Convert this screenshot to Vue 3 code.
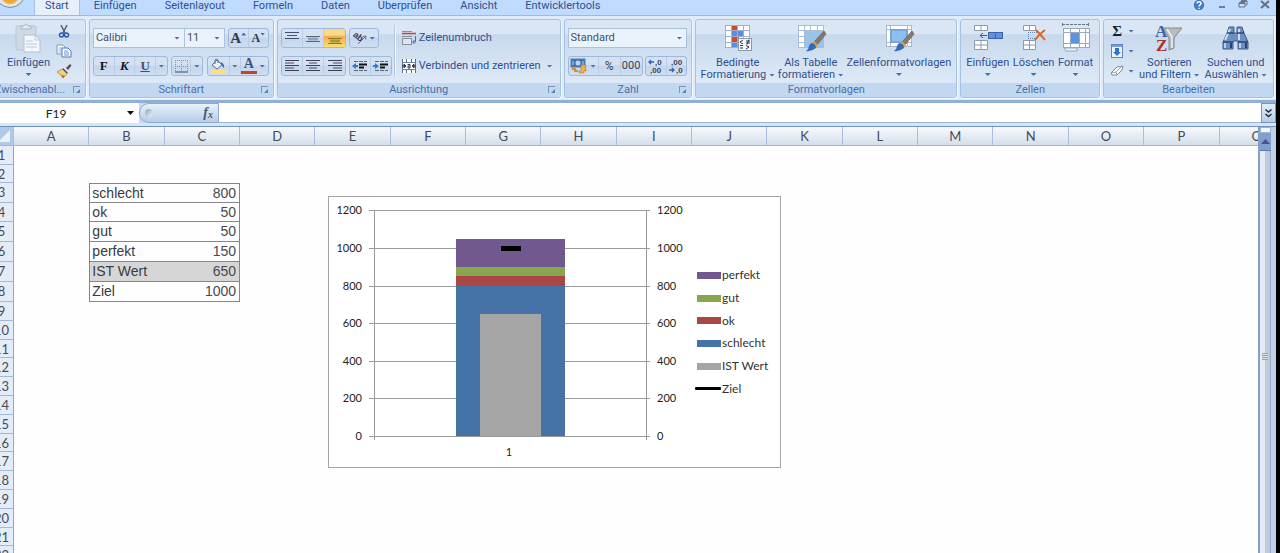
<script setup>
const tabs = ['Start', 'Einfügen', 'Seitenlayout', 'Formeln', 'Daten', 'Überprüfen', 'Ansicht', 'Entwicklertools']
const columns = 'ABCDEFGHIJKLMNOPQ'.split('')
const data = {
  3: ['schlecht', 800],
  4: ['ok', 50],
  5: ['gut', 50],
  6: ['perfekt', 150],
  7: ['IST Wert', 650],
  8: ['Ziel', 1000],
}
const tall = [3, 5, 6, 7, 8]
const short = [2, 11, 16, 21]
const rows = Array.from({ length: 22 }, (_, i) => {
  const n = i + 1
  return { n, cells: data[n], size: tall.includes(n) ? 'tall' : short.includes(n) ? 'short' : '' }
})

const y = (v) => Math.round(239 - v * 0.188)
const ticks = [0, 200, 400, 600, 800, 1000, 1200]
const stack = [
  { from: 0, to: 800, color: '#4572a7' },
  { from: 800, to: 850, color: '#aa4643' },
  { from: 850, to: 900, color: '#89a54e' },
  { from: 900, to: 1050, color: '#71588f' },
]
const legend = [
  { name: 'perfekt', kind: 'purple' },
  { name: 'gut', kind: 'green' },
  { name: 'ok', kind: 'red' },
  { name: 'schlecht', kind: 'blue' },
  { name: 'IST Wert', kind: 'grey' },
  { name: 'Ziel', kind: 'line' },
]
</script>

<template>
  <div class="window">
    <nav class="tabs">
      <span class="orb"><i></i></span>
      <button v-for="(t, i) in tabs" :key="t" :class="['tab', { active: i === 0 }]">{{ t }}</button>
      <div class="wincontrols">
        <button aria-label="Hilfe">
          <svg width="14" height="14" viewBox="0 0 14 14"><circle cx="7" cy="4" r="6" fill="#3b7cc9" stroke="#cfe0f2" stroke-width="1.5" /><path d="M5 2.500Q5 .8 7 .8T9 2.600Q9 3.600 7.800 4.200Q7 4.600 7 5.600M7 6.800V8" fill="none" stroke="#fff" stroke-width="1.5" /></svg>
        </button>
        <button aria-label="Minimieren">
          <svg width="8" height="14" viewBox="0 0 8 14"><path d="M1 6H7" stroke="#6b7f9b" stroke-width="2" /></svg>
        </button>
        <button aria-label="Wiederherstellen">
          <svg width="10" height="14" viewBox="0 0 10 14"><path d="M3 1V0H9V4H7.500M1 2H7V6H1Z" fill="none" stroke="#6b7487" stroke-width="1" /><path d="M1 2H7M3 0H9" stroke="#6b7487" stroke-width="2" /></svg>
        </button>
        <button aria-label="Schließen">
          <svg width="10" height="14" viewBox="0 0 10 14"><path d="M1 0L9 7M9 0L1 7" stroke="#6b6f7c" stroke-width="2" /></svg>
        </button>
      </div>
    </nav>

    <div class="ribbon">
      <section class="group g-clip">
        <div class="body">
          <button class="big">
            <svg width="28" height="30" viewBox="0 0 28 30"><rect x="2" y="3" width="20" height="24" rx="2" fill="#cfd9e6" stroke="#b9c5d5" /><path d="M7 6V3H10Q12 -1 14 3H17V6Z" fill="#e3e9f1" stroke="#a9b6c8" /><path d="M10 12H21L26 17V29H10Z" fill="#f3f6fa" stroke="#b4c0d0" /><path d="M21 12V17H26M12 18H19M12 21H23M12 24H23" fill="none" stroke="#c0cad8" /></svg>
            <span>Einfügen</span>
            <i class="arr"></i>
          </button>
          <div class="smallcol">
            <button aria-label="Ausschneiden">
              <svg width="16" height="16" viewBox="0 0 16 16"><path d="M5 2L9 10M11 2L7 10" stroke="#51627d" stroke-width="1.6" /><circle cx="5.500" cy="12" r="2" fill="none" stroke="#2a5cb8" stroke-width="1.5" /><circle cx="10.500" cy="12" r="2" fill="none" stroke="#2a5cb8" stroke-width="1.5" /></svg>
            </button>
            <button aria-label="Kopieren">
              <svg width="16" height="16" viewBox="0 0 16 16"><path d="M1 2H7L9 4V11H1Z" fill="#fff" stroke="#7d97bf" /><path d="M2.500 5H7M2.500 7H7M2.500 9H7" stroke="#8fb1e0" /><path d="M6 5H12L15 8V14H6Z" fill="#fff" stroke="#5577b4" /><path d="M8 8H12M8 10H13M8 12H13" stroke="#5f90da" /></svg>
            </button>
            <button aria-label="Format übertragen">
              <svg width="16" height="16" viewBox="0 0 16 16"><path d="M10 5L14 1L15.500 2.500L12 7Z" fill="#55524a" /><path d="M7 5L12 10L10 11L6 7Z" fill="#3f4654" /><path d="M6 6L11 11L7 15L5 12L1 9Z" fill="#f3cf7d" stroke="#c99642" /><path d="M5 12L7 15L9 13" fill="#b5642b" /></svg>
            </button>
          </div>
        </div>
        <footer><span class="cut">Zwischenabl...</span><i class="launch"></i></footer>
      </section>

      <section class="group g-font">
        <div class="body stackrows">
          <div class="line">
            <label class="combo c-name"><select aria-label="Schriftart"><option>Calibri</option></select><i class="arr"></i></label>
            <label class="combo c-size"><select aria-label="Schriftgrad"><option>11</option></select><i class="arr"></i></label>
            <div class="set s-41 gap-l">
              <button class="serif-a big-a">A<i class="up"></i></button>
              <button class="serif-a small-a">A<i class="down"></i></button>
            </div>
          </div>
          <div class="line between">
            <div class="set s-75">
              <button class="fmt">F</button><button class="fmt it">K</button><button class="fmt un">U</button><button class="drop" aria-label="Unterstreichen"><i class="arr"></i></button>
            </div>
            <div class="set s-32">
              <button aria-label="Rahmen"><svg width="13" height="13" viewBox="0 0 13 13"><path d="M.5 0V12M12.500 0V12M6.500 0V12M0 .5H13M0 6.500H13" stroke="#8292aa" stroke-dasharray="1 1" /><path d="M0 12H13" stroke="#3f4c60" stroke-width="1" /></svg></button><button class="drop" aria-label="Rahmenarten"><i class="arr"></i></button>
            </div>
            <div class="set s-62">
              <button aria-label="Füllfarbe"><svg width="16" height="16" viewBox="0 0 16 16"><path d="M7 2L12 7L7 11L2 7Z" fill="#e8eef6" stroke="#5c6f8d" /><path d="M5 6V2Q6 0 8 2V5" fill="none" stroke="#5c6f8d" /><path d="M10 4Q15 5 14 10Q12 9 12 7Z" fill="#3f70b5" /><rect x="1" y="12" width="14" height="3" fill="#ffdf80" /></svg></button><button class="drop" aria-label="Füllfarben"><i class="arr"></i></button>
              <button class="fontcolor" aria-label="Schriftfarbe">A</button><button class="drop" aria-label="Schriftfarben"><i class="arr"></i></button>
            </div>
          </div>
        </div>
        <footer><span>Schriftart</span><i class="launch"></i></footer>
      </section>

      <section class="group g-align">
        <div class="body">
          <div class="stackcol">
            <div class="line g3">
              <div class="set s-64">
                <button aria-label="Oben ausrichten"><svg width="14" height="14" viewBox="0 0 14 14"><path d="M0 1.500H14M0 7.500H14" stroke="#46506a" /><path d="M2 4.500H12" stroke="#7d3f6b" /></svg></button>
                <button aria-label="Zentriert ausrichten"><svg width="14" height="14" viewBox="0 0 14 14"><path d="M0 5.500H14M0 10.500H14" stroke="#5e6879" /><path d="M2 8H12" stroke="#8fa1bd" stroke-width="3" /></svg></button>
                <button class="on" aria-label="Unten ausrichten"><svg width="14" height="14" viewBox="0 0 14 14"><path d="M0 7.500H14M0 12.500H14" stroke="#8d7a2a" /><path d="M2 10H12" stroke="#a19b3e" stroke-width="3" /></svg></button>
              </div>
              <div class="set s-30">
                <button aria-label="Orientierung"><svg width="17" height="16" viewBox="0 0 17 16"><text x="1" y="8" transform="rotate(38 4 6)" class="ab">ab</text><path d="M6 14L14 6M14 6L10.500 6.500M14 6L13.500 9.500" stroke="#6b7687" fill="none" /></svg><i class="arr"></i></button>
              </div>
            </div>
            <div class="line g3">
              <div class="set s-64">
                <button aria-label="Linksbündig"><svg width="14" height="12" viewBox="0 0 14 12"><path d="M0 .5H14M0 5.500H14M0 10.500H14" stroke="#3b4254" /><path d="M0 3H9M0 8H9" stroke="#59406a" /></svg></button>
                <button aria-label="Zentriert"><svg width="14" height="12" viewBox="0 0 14 12"><path d="M0 .5H14M0 5.500H14M0 10.500H14" stroke="#3b4254" /><path d="M3 3H11M3 8H11" stroke="#59406a" /></svg></button>
                <button aria-label="Rechtsbündig"><svg width="14" height="12" viewBox="0 0 14 12"><path d="M0 .5H14M0 5.500H14M0 10.500H14" stroke="#3b4254" /><path d="M5 3H14M5 8H14" stroke="#59406a" /></svg></button>
              </div>
              <div class="set s-43">
                <button aria-label="Einzug verkleinern"><svg width="16" height="13" viewBox="0 0 16 13"><path d="M2 1.500H15M2 10.500H15" stroke="#59647a" stroke-dasharray="4 1" /><path d="M7 4.500H15M7 7.500H12" stroke="#111" stroke-width="2" /><path d="M0 6L4 3V5H6V7H4V9Z" fill="#2f7ad0" /></svg></button>
                <button aria-label="Einzug vergrößern"><svg width="16" height="13" viewBox="0 0 16 13"><path d="M2 1.500H15M2 10.500H15" stroke="#59647a" stroke-dasharray="4 1" /><path d="M7 4.500H15M7 7.500H12" stroke="#111" stroke-width="2" /><path d="M6 6L2 3V5H0V7H2V9Z" fill="#2f7ad0" /></svg></button>
              </div>
            </div>
          </div>
          <div class="sep"></div>
          <div class="stackcol">
            <button class="wide">
              <svg width="16" height="16" viewBox="0 0 16 16"><path d="M1 1.500H11M1 6.500H11" stroke="#87909f" /><path d="M1 3.500H15" stroke="#c5403b" stroke-width="1.500" /><rect x="1.500" y="8.500" width="9" height="6" fill="#dfe5ee" stroke="#87909f" /><path d="M14.500 6V12H12M13.500 10L11.500 12L13.500 14" fill="none" stroke="#3e6db0" /></svg>
              Zeilenumbruch
            </button>
            <button class="wide">
              <svg width="16" height="16" viewBox="0 0 16 16"><rect x="1" y="1" width="14" height="14" fill="#fff" /><path d="M1.500 1V15M14.500 1V15M5.500 1V4M10.500 1V4M5.500 12V15M10.500 12V15" stroke="#5b6c88" /><path d="M1 4.500H15M1 11.500H15" stroke="#6d83a6" /><path d="M1 8H4M15 8H12M3 6L5 8L3 10ZM13 6L11 8L13 10Z" fill="#333b4c" stroke="#333b4c" /><path d="M6.500 6.500H9V10H7V8H9" fill="none" stroke="#333b4c" /></svg>
              Verbinden und zentrieren <i class="arr"></i>
            </button>
          </div>
        </div>
        <footer><span>Ausrichtung</span><i class="launch"></i></footer>
      </section>

      <section class="group g-num">
        <div class="body stackrows">
          <label class="combo c-num"><select aria-label="Zahlenformat"><option>Standard</option></select><i class="arr"></i></label>
          <div class="line between">
            <div class="set s-75">
              <button class="money" aria-label="Buchhaltung"><svg width="17" height="16" viewBox="0 0 17 16"><rect x="1" y="1" width="14" height="8" fill="#3b74b5" stroke="#5f7ea6" /><circle cx="8" cy="5" r="2.500" fill="#bcd4ee" /><path d="M3 3V7M13 3V7" stroke="#bcd4ee" /><path d="M11 7H16V9H15V11H16V13H14V15H9V13H11Z" fill="#f0b24b" stroke="#b26c1d" stroke-width=".5" /><path d="M2 11H6M4 13H8" stroke="#d98b39" stroke-width="2" /></svg><i class="arr"></i></button>
              <button class="sym">%</button><button class="sym narrow">000</button>
            </div>
            <div class="set s-42">
              <button aria-label="Dezimalstelle hinzufügen"><svg width="18" height="16" viewBox="0 0 18 16"><path d="M2 4H7M4 2L2 4L4 6" stroke="#2f67b8" stroke-width="1.300" fill="none" /><text x="8" y="7" class="dec">,0</text><text x="3" y="15" class="dec">,00</text></svg></button>
              <button aria-label="Dezimalstelle löschen"><svg width="18" height="16" viewBox="0 0 18 16"><text x="3" y="7" class="dec">,00</text><path d="M1 12H6M4 10L6 12L4 14" stroke="#2f67b8" stroke-width="1.300" fill="none" /><text x="8" y="15" class="dec">,0</text></svg></button>
            </div>
          </div>
        </div>
        <footer><span>Zahl</span><i class="launch"></i></footer>
      </section>

      <section class="group g-styles">
        <div class="body">
          <button class="big">
            <svg width="30" height="30" viewBox="0 0 30 30"><rect x="2" y="2" width="25" height="23" fill="#fff" /><rect x="8" y="2" width="6" height="5" fill="#d0492b" /><rect x="8" y="8" width="12" height="6" fill="#5a8ddd" /><rect x="8" y="14" width="8" height="5" fill="#d0492b" /><rect x="8" y="20" width="7" height="5" fill="#5a8ddd" /><path d="M2.500 2V25M8.500 2V25M14.500 2V25M20.500 2V25M26.500 2V25M2 2.500H27M2 7.500H27M2 13.500H27M2 19.500H27M2 24.500H27" stroke="#9fb2cd" /><rect x="15.500" y="15.500" width="13" height="12" fill="#f4f6f9" stroke="#8a99b0" /><path d="M20 17L17 19L20 21M17 22.500H20M17 25H20M23 18H27M23 20H27M26 16.500L24 21.500M23 22.500L26 24L23 26" fill="none" stroke="#303745" /></svg>
            <span>Bedingte<br>Formatierung <i class="arr"></i></span>
          </button>
          <button class="big">
            <svg width="30" height="30" viewBox="0 0 30 30"><rect x="2" y="2" width="26" height="23" fill="#fff" /><rect x="8" y="8" width="20" height="17" fill="#93c6f3" /><path d="M2.500 2V25M8.500 2V25M14.500 2V25M21.500 2V25M27.500 2V25M2 2.500H28M2 7.500H28M2 13.500H28M2 19.500H28M2 24.500H28" stroke="#a9bdd8" /><path d="M28 8L18 19L21 22L30 11Z" fill="#88786b" stroke="#5c5148" stroke-width=".6" /><path d="M18 18L22 22L20 25L16 20Z" fill="#d8a05d" /><path d="M16 20Q20 21 20 25Q15 29 10 28Q13 26 13 23Q14 20 16 20Z" fill="#2f6cbb" /></svg>
            <span>Als Tabelle<br>formatieren <i class="arr"></i></span>
          </button>
          <button class="big">
            <svg width="30" height="30" viewBox="0 0 30 30"><rect x="2" y="2" width="26" height="22" fill="#fff" /><path d="M2.500 2V24M6.500 2V24M23.500 2V24M27.500 2V24M2 2.500H28M2 6.500H28M2 19.500H28M2 23.500H28" stroke="#a9b7cc" /><rect x="7" y="7" width="16" height="12" fill="#8bc0f5" stroke="#5b8fd0" /><path d="M28 8L18 19L21 22L30 11Z" fill="#88786b" stroke="#5c5148" stroke-width=".6" /><path d="M18 18L22 22L20 25L16 20Z" fill="#d8a05d" /><path d="M16 20Q20 21 20 25Q15 29 10 28Q13 26 13 23Q14 20 16 20Z" fill="#2f6cbb" /></svg>
            <span>Zellenformatvorlagen</span>
            <i class="arr"></i>
          </button>
        </div>
        <footer><span>Formatvorlagen</span></footer>
      </section>

      <section class="group g-cells">
        <div class="body">
          <button class="big">
            <svg width="30" height="30" viewBox="0 0 30 30"><path d="M1.500 2.500H14.500V7.500H1.500ZM8 2V8M1.500 17.500H14.500V26.500H1.500ZM8 17V27M1 22H15" fill="#fff" stroke="#8e9aac" /><rect x="15.500" y="9.500" width="14" height="6" fill="#5f93e2" stroke="#3f62a5" /><path d="M22.500 9V16" stroke="#3f62a5" /><path d="M7 12.500H14M10 10L7 12.500L10 15" fill="none" stroke="#515c6e" /></svg>
            <span>Einfügen</span><i class="arr"></i>
          </button>
          <button class="big">
            <svg width="30" height="30" viewBox="0 0 30 30"><path d="M4.500 2.500H16.500V7.500H4.500ZM10.500 2V8M4.500 17.500H16.500V26.500H4.500ZM10.500 17V27M4 22H17" fill="#fff" stroke="#8e9aac" /><path d="M9 9.500H18M9 15.500H18M9.500 9V16" stroke="#5d7fb8" stroke-dasharray="1 1" /><path d="M17 7Q22 12 26 17M26 7Q20 11 16 17" fill="none" stroke="#e2601f" stroke-width="2" /></svg>
            <span>Löschen</span><i class="arr"></i>
          </button>
          <button class="big">
            <svg width="30" height="30" viewBox="0 0 30 30"><path d="M1.500 0V4M27.500 0V4M1 1.500H28" stroke="#6a7688" stroke-dasharray="3 1" /><rect x="2" y="5" width="26" height="20" fill="#fff" /><rect x="10" y="10" width="8" height="10" fill="#5f93e2" /><path d="M2.500 5V25M9.500 5V25M18.500 5V25M24.500 5V25M28.500 5V25M2 5.500H29M2 9.500H29M2 20.500H29M2 24.500H29" stroke="#9aa8bf" /><path d="M3 25H16V28H5Z" fill="#edf1f6" stroke="#9aa8bf" /></svg>
            <span>Format</span><i class="arr"></i>
          </button>
        </div>
        <footer><span>Zellen</span></footer>
      </section>

      <section class="group g-edit">
        <div class="body">
          <div class="smallcol">
            <button class="sigma"><span>Σ</span><i class="arr"></i></button>
            <button aria-label="Füllbereich"><svg width="14" height="16" viewBox="0 0 14 16"><rect x="1.500" y="1.500" width="11" height="13" fill="#eef3fa" stroke="#5c85c2" /><rect x="2" y="2" width="10" height="2" fill="#74a0dc" /><path d="M5 5H9V9H11L7 13L3 9H5Z" fill="#2f74cc" /></svg><i class="arr"></i></button>
            <button aria-label="Löschen"><svg width="14" height="16" viewBox="0 0 14 16"><path d="M1 10L7 4L13 3L12 7L7 12H2Z" fill="#fdfdfd" stroke="#7c8797" /><path d="M1 10L6 9L12 3M6 9L7 12" fill="none" stroke="#9aa5b5" /></svg><i class="arr"></i></button>
          </div>
          <button class="big">
            <svg width="30" height="30" viewBox="0 0 30 30"><path d="M9 5H28L20 15V25L15 27V15Z" fill="#b9bbbd" stroke="#85878b" /><path d="M13 6L18 14V25" fill="none" stroke="#eeeeee" stroke-width="1.500" /><text x="1" y="14" class="az blue">A</text><text x="2" y="28" class="az red">Z</text></svg>
            <span>Sortieren<br>und Filtern <i class="arr"></i></span>
          </button>
          <button class="big">
            <svg width="30" height="30" viewBox="0 0 30 30"><path d="M8 4H13V10H16V4H21L23 10L27 19V26H17V18H12V26H2V19L6 10Z" fill="#6d8fc0" stroke="#3d5a8c" /><path d="M4 17L9 6M18 17V6" stroke="#cfdef2" stroke-width="2" /><path d="M2 19H12M17 19H27M6 10H13M16 10H23" stroke="#26457d" stroke-width="1.500" /><path d="M4 20V25M19 20V25" stroke="#b8cdea" stroke-width="2" /><path d="M10 20V25M25 20V25" stroke="#24417a" stroke-width="2" /></svg>
            <span>Suchen und<br>Auswählen <i class="arr"></i></span>
          </button>
        </div>
        <footer><span>Bearbeiten</span></footer>
      </section>
    </div>

    <div class="formulabar">
      <label class="namebox"><input aria-label="Namenfeld" value="F19"><i class="arr black"></i></label>
      <div class="fxarea"><i class="knob"></i><button class="fx">f<sub>x</sub></button></div>
      <input class="formula" aria-label="Bearbeitungsleiste" value="">
      <button class="expand" aria-label="Bearbeitungsleiste erweitern"><svg width="9" height="11" viewBox="0 0 9 11"><path d="M1.500 1.500L4.500 4L7.500 1.500M1.500 6L4.500 8.500L7.500 6" fill="none" stroke="#222a3a" stroke-width="1.500" /></svg></button>
    </div>

    <div class="work">
      <main class="sheet">
        <table>
          <thead>
            <tr><th class="corner"><i></i></th><th v-for="c in columns" :key="c">{{ c }}</th></tr>
          </thead>
          <tbody>
            <tr v-for="r in rows" :key="r.n" :class="[r.size, { filled: r.cells, first: r.n === 3, ist: r.n === 7 }]">
              <th>{{ r.n }}</th>
              <td></td>
              <td class="name">{{ r.cells?.[0] }}</td>
              <td class="value">{{ r.cells?.[1] }}</td>
              <td v-for="k in 14" :key="k"></td>
            </tr>
          </tbody>
        </table>

        <figure class="chart">
          <svg width="368" height="270" viewBox="0 0 368 270">
            <g stroke="#999b9f" shape-rendering="crispEdges">
              <line v-for="t in ticks" :key="t" x1="40" x2="321" :y1="y(t)" :y2="y(t)" />
              <line x1="45" x2="45" y1="13" y2="243" />
              <line x1="317" x2="317" y1="13" y2="243" />
            </g>
            <g shape-rendering="crispEdges">
              <rect v-for="s in stack" :key="s.from" x="127" width="109" :y="y(s.to)" :height="y(s.from) - y(s.to)" :fill="s.color" />
              <rect x="151" width="61" :y="y(650)" :height="y(0) - y(650)" fill="#a5a5a5" />
              <rect x="172" width="20" :y="y(1000) - 2" height="5" fill="#000" />
            </g>
            <g class="axis">
              <text v-for="t in ticks" :key="t" x="33" :y="y(t) + 4" text-anchor="end">{{ t }}</text>
              <text v-for="t in ticks" :key="'r' + t" x="328" :y="y(t) + 4">{{ t }}</text>
              <text x="180" y="259" text-anchor="middle">1</text>
            </g>
          </svg>
          <ul>
            <li v-for="l in legend" :key="l.name"><i :class="l.kind"></i>{{ l.name }}</li>
          </ul>
        </figure>
      </main>
      <div class="scroll">
        <div class="split"></div>
        <button aria-label="Nach oben"><i></i></button>
        <div class="thumb"><i></i></div>
      </div>
    </div>
  </div>
</template>

<style>
body { background: #000; overflow: hidden; }
</style>

<style scoped>
* { box-sizing: border-box; }
.window { height: 100vh; margin-right: 4px; display: flex; flex-direction: column; overflow: hidden; background: #bfdbff; font: 11px/12px Roboto, "Noto Sans", sans-serif; color: #2f5191; }
button { font: inherit; color: inherit; background: none; border: 0; padding: 0; margin: 0; white-space: nowrap; }
svg { display: block; flex: none; overflow: visible; }
i { font-style: normal; }

.tabs { height: 15px; flex: none; display: flex; position: relative; }
.orb { width: 34px; height: 15px; overflow: hidden; position: relative; }
.orb i { position: absolute; left: -6px; top: -24px; width: 32px; height: 32px; border-radius: 50%; background: radial-gradient(circle at 50% 60%, #f0a834 0 8px, #e4e9f0 10px, #c9d2df 15px); border: 1px solid #8090a8; }
.tab { height: 15px; padding: 0 14px 3px; line-height: 12px; }
.tab.active { padding: 0 10px 3px; background: #e6effa; border: 1px solid #a2c3ee; border-width: 0 1px; }
.wincontrols { margin-left: auto; display: flex; gap: 12px; padding-right: 6px; }

.ribbon { height: 85px; flex: none; display: flex; gap: 3px; padding: 3px 2px 2px 0; background: #dfebf8; border-top: 1px solid #9bbbe5; }
.group { display: flex; flex-direction: column; min-width: 0; border: 1px solid #a5c2e4; border-radius: 3px; background: linear-gradient(#dae6f4 0 18%, #c8d9ed 19%, #dce8f5 78%); overflow: hidden; box-shadow: 1px 1px 0 #f2f8ff; }
.g-clip { flex: 92 1 92px; margin-left: -6px; }
.g-font { flex: 185 1 185px; }
.g-align { flex: 284 1 284px; }
.g-num { flex: 129 1 129px; }
.g-styles { flex: 262 1 262px; }
.g-cells { flex: 140 1 140px; }
.g-edit { flex: 171 1 171px; }
.body { flex: 1; display: flex; min-height: 0; }
.group footer { height: 14px; background: #c1d8f0; color: #4a70ac; display: flex; align-items: center; justify-content: center; position: relative; }
.launch { position: absolute; right: 5px; top: 3px; width: 7px; height: 7px; border: 1px solid #7c95ba; border-width: 1px 0 0 1px; }
.launch::after { content: ""; position: absolute; right: 0; bottom: 0; border: 2px solid #6080b0; border-top-color: transparent; border-left-color: transparent; }
.cut { margin-right: 20px; }

.arr { display: inline-block; width: 6px; height: 3px; background: #4d6fa6; clip-path: polygon(0 0, 100% 0, 50% 100%); vertical-align: middle; flex: none; }
.arr.black { background: #111; width: 7px; height: 4px; }
.big { display: flex; flex-direction: column; align-items: center; text-align: center; padding-top: 3px; }
.big > span { margin-top: 4px; }
.big > .arr { margin-top: 4px; }
.g-clip .body { padding-left: 12px; }
.smallcol { display: flex; flex-direction: column; gap: 4px; padding: 3px 0 0 6px; }
.smallcol button { height: 16px; display: flex; align-items: center; gap: 4px; }

.stackrows, .stackcol { display: flex; flex-direction: column; gap: 8px; }
.stackrows { padding: 8px 4px 0 3px; }
.stackcol { padding-top: 8px; }
.line { display: flex; height: 20px; }
.g3 { gap: 3px; }
.between { justify-content: space-between; }
.combo { height: 20px; background: #eaf2fb; border: 1px solid #abc1de; display: flex; align-items: center; padding-right: 4px; }
.combo select { flex: 1; min-width: 0; appearance: none; border: 0; background: none; font: inherit; color: #46505f; padding: 0 2px; height: 18px; }
.c-name { width: 92px; }
.c-size { width: 41px; margin-left: -1px; }
.gap-l { margin-left: auto; }
.set { display: flex; height: 20px; border: 1px solid #9fb9dc; border-radius: 3px; background: linear-gradient(#d3e1f2 0 45%, #c3d6ed 50%, #cfdff2); }
.set button { flex: 1 1 0; display: flex; align-items: center; justify-content: center; border-right: 1px solid #b9cde7; min-width: 0; }
.set button:last-child { border-right: 0; }
.set .drop { flex: 0 0 11px; }
.s-41 { width: 41px; } .s-75 { width: 75px; } .s-32 { width: 32px; } .s-62 { width: 62px; }
.s-64 { width: 65px; } .s-30 { width: 30px; } .s-43 { width: 43px; } .s-42 { width: 42px; }
.set .on { background: linear-gradient(#fbd98b 0 35%, #f5a94c 40%, #fbe073); }
.set .money { flex: 0 0 30px; gap: 3px; }
.serif-a, .fmt, .fontcolor { font-family: "Liberation Serif", serif; font-weight: bold; color: #333b50; }
.big-a { font-size: 15px; }
.small-a { font-size: 12px; }
.up, .down { width: 5px; height: 3px; background: #3c68b0; margin-bottom: 8px; }
.up { clip-path: polygon(50% 0, 100% 100%, 0 100%); }
.down { clip-path: polygon(0 0, 100% 0, 50% 100%); }
.fmt { font-size: 13px; color: #14141f; }
.it { font-style: italic; }
.un { text-decoration: underline; color: #44506a; }
.set .fontcolor { font-size: 14px; line-height: 12px; color: #3a5387; align-self: center; flex: 0 0 16px; height: 16px; padding-bottom: 2px; border-right: 0; border-bottom: 3px solid #cc3f24; }
.ab { font: bold 9px "Liberation Sans", sans-serif; fill: #3c3544; }
.sym { font-size: 12px; color: #3d4350; }
.narrow { font-size: 11px; }
.dec { font: bold 8px "Liberation Sans", sans-serif; fill: #3d4656; }
.g-align .body { padding-left: 3px; }
.sep { width: 2px; height: 52px; margin: 5px 5px 0 2px; background: linear-gradient(90deg, #b0c6e2 50%, #eef5fd 50%); }
.wide { height: 20px; display: flex; align-items: center; gap: 2px; }
.wide .arr { margin-left: 4px; }

.g-styles .body { padding: 0 5px 0 4px; justify-content: space-between; }
.g-cells .body { padding: 0 6px 0 5px; justify-content: space-between; }
.g-edit .body { padding: 0 6px 0 0; justify-content: space-between; }
.sigma { font: bold 15px "Liberation Serif", serif; color: #1a1f2c; }
.sigma span { width: 14px; text-align: center; }
.az { font: bold 17px "Liberation Serif", serif; }
.az.blue { fill: #3a66ac; }
.az.red { fill: #a8332b; }

.formulabar { height: 26px; flex: none; display: flex; border-top: 3px solid #92b0d3; border-bottom: 3px solid #d6e6f7; background: #c5daf2; }
.namebox { width: 139px; flex: none; background: #fff; display: flex; align-items: center; }
.namebox input { flex: 1; min-width: 0; border: 0; padding: 0; background: none; text-align: center; font: 12px Lato, sans-serif; color: #222; padding-right: 15px; }
.namebox .arr { margin-right: 5px; }
.fxarea { width: 80px; flex: none; border: 1px solid #8fabd0; border-radius: 10px 0 0 10px; background: linear-gradient(#e8f1fb, #b5cde8); display: flex; align-items: center; justify-content: space-between; padding: 0 5px; }
.knob { width: 8px; height: 8px; border-radius: 50%; background: linear-gradient(135deg, #94a2b6, #f2f5f9); }
.fx { font: italic bold 14px "Liberation Serif", serif; color: #4b566d; }
.fx sub { font-size: 10px; vertical-align: -1px; line-height: 0; }
.formula { flex: 1; min-width: 0; border: 0; border-bottom: 1px solid #9cb6d6; background: #fff; padding: 0 4px; }
.expand { width: 15px; flex: none; display: flex; align-items: center; justify-content: center; border: 1px solid #7795be; background: linear-gradient(#e3eefa, #b5cdea); }

.work { flex: 1; display: flex; min-height: 0; border-top: 1px solid #6f92bd; }
.sheet { flex: 1; min-width: 0; position: relative; overflow: hidden; background: #fefefe; }
table { table-layout: fixed; border-collapse: separate; border-spacing: 0; width: calc(100% + 49px); margin-left: -12px; }
th { font: 13px/17px Lato, sans-serif; color: #444c59; padding: 0; }
thead th { height: 19px; background: linear-gradient(#f7fafd, #d5deea); border-right: 1px solid #a9bfdc; border-bottom: 1px solid #a0b5d0; }
thead th.corner { width: 26px; background: #b0c9eb; }
.corner i { display: block; width: 12px; height: 12px; margin-left: 10px; background: #e8f1fc; clip-path: polygon(100% 0, 100% 100%, 0 100%); }
tbody th { height: 19px; padding-left: 2px; background: #e4ecf7; border-right: 1px solid #8ba6cb; border-bottom: 1px solid #a3b9d6; }
tbody tr.tall th { height: 20px; }
tbody tr.short th { height: 18px; line-height: 16px; }
td { padding: 0; font: 14px/17px "Liberation Sans", Arial, sans-serif; color: #4a4a4e; white-space: nowrap; }
.filled .name { border: 1px solid #85858a; border-width: 0 0 1px 1px; padding-left: 2px; color: #3a3a3e; }
.filled .value { border: 1px solid #85858a; border-width: 0 1px 1px 0; padding-right: 3px; text-align: right; }
.first .name, .first .value { border-top-width: 1px; }
.ist .name, .ist .value { background: #d6d6d6; }

.chart { position: absolute; left: 328px; top: 69px; margin: 0; width: 453px; height: 272px; border: 1px solid #a5a5a5; background: #fff; display: flex; }
.axis { font: 11px Lato, sans-serif; fill: #222; }
.chart ul { list-style: none; margin: 67px 0 0; padding: 0; height: 136px; display: flex; flex-direction: column; font: 12px/22px Lato, sans-serif; color: #333; }
.chart li { flex: 1; display: flex; align-items: center; gap: 1px; white-space: nowrap; }
.chart li i { width: 24px; height: 7px; margin-left: 0; }
.purple { background: #71588f; } .green { background: #89a54e; } .red { background: #aa4643; }
.blue { background: #4572a7; } .grey { background: #a5a5a5; }
.chart li .line { width: 26px; height: 3px; margin: 0 0 0 -2px; border-radius: 1px; background: #000; }

.scroll { width: 18px; flex: none; display: flex; flex-direction: column; border-left: 2px solid #85a0c8; border-right: 5px solid #bfd2e8; }
.split { height: 6px; border: 1px solid #9bb8dc; background: #f4f8fd; }
.scroll button { height: 18px; display: flex; align-items: center; justify-content: center; background: #809fcd; border-bottom: 1px solid #5c7aaa; }
.scroll button i { width: 9px; height: 5px; background: #49538b; clip-path: polygon(50% 0, 100% 100%, 0 100%); }
.thumb { flex: 1; background: linear-gradient(90deg, #e6ebf2 45%, #bccadd 50%); padding: 202px 2px 0; border-right: 1px solid #98abc4; }
.thumb i { display: block; height: 7px; background: repeating-linear-gradient(#9ea4ac 0 1px, #d8dde3 1px 2px); }
</style>
